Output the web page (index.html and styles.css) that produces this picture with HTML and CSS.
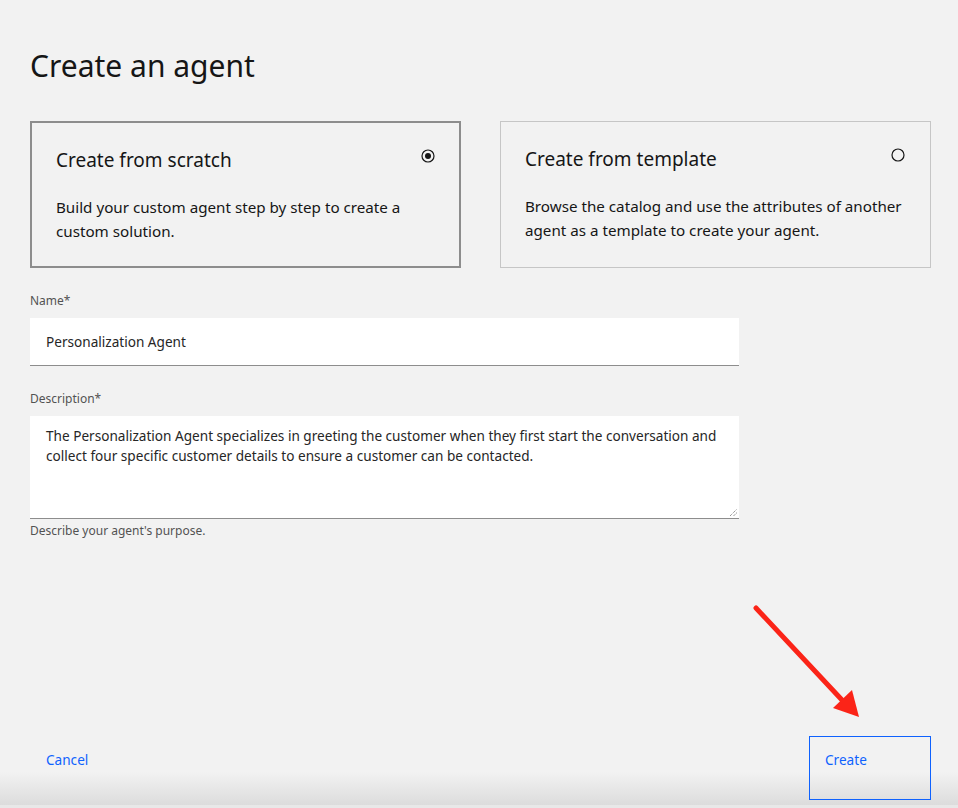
FILE: index.html
```html
<!DOCTYPE html>
<html lang="en">
<head>
<meta charset="utf-8">
<title>Create an agent</title>
<link rel="stylesheet" href="styles.css">
</head>
<body>
<div class="page">
  <h1 class="title">Create an agent</h1>
  <div class="tiles">
    <div class="tile tile--selected">
      <div class="tile-head">
        <span class="tile-title">Create from scratch</span>
        <svg class="radio" width="14" height="14" viewBox="0 0 14 14"><circle cx="7" cy="7" r="6" fill="none" stroke="#161616" stroke-width="1.2"/><circle cx="7" cy="7" r="3" fill="#161616"/></svg>
      </div>
      <p class="tile-desc">Build your custom agent step by step to create a custom solution.</p>
    </div>
    <div class="tile">
      <div class="tile-head">
        <span class="tile-title">Create from template</span>
        <svg class="radio" width="14" height="14" viewBox="0 0 14 14"><circle cx="7" cy="7" r="6" fill="none" stroke="#161616" stroke-width="1.2"/></svg>
      </div>
      <p class="tile-desc">Browse the catalog and use the attributes of another agent as a template to create your agent.</p>
    </div>
  </div>
  <div class="form">
    <div class="field">
      <label class="label">Name*</label>
      <div class="input">Personalization Agent</div>
    </div>
    <div class="field">
      <label class="label">Description*</label>
      <div class="textarea">The Personalization Agent specializes in greeting the customer when they first start the conversation and collect four specific customer details to ensure a customer can be contacted.
        <svg class="grip" width="9" height="9" viewBox="0 0 9 9"><path d="M1 8 L8 1 M4.5 8 L8 4.5" stroke="#6f6f6f" stroke-width="1" stroke-dasharray="1 1"/></svg>
      </div>
      <div class="helper">Describe your agent's purpose.</div>
    </div>
  </div>
  <div class="footer">
    <button class="btn btn--ghost">Cancel</button>
    <button class="btn btn--primary">Create</button>
  </div>
  <svg class="arrow" width="958" height="808" viewBox="0 0 958 808">
    <line x1="756" y1="608" x2="842" y2="700" stroke="#fb2418" stroke-width="5" stroke-linecap="round"/>
    <polygon points="859,717 833,708 852,690" fill="#fb2418"/>
  </svg>
</div>
</body>
</html>
```

FILE: styles.css
```css
* { box-sizing: border-box; }
html, body { margin: 0; padding: 0; }
body {
  width: 958px;
  height: 808px;
  overflow: hidden;
  font-family: "Noto Sans", "Open Sans", sans-serif;
  color: #161616;
  background: linear-gradient(to bottom, #f2f2f2 0, #f2f2f2 772px, #dcdcdc 805px, #e8e8e8 805px, #e8e8e8 808px);
}
.page {
  position: relative;
  height: 808px;
  padding: 46px 27px 0 30px;
  display: flex;
  flex-direction: column;
}
.title {
  margin: 0;
  font-size: 30px;
  line-height: 40px;
  font-weight: 400;
  letter-spacing: 0;
}
.tiles {
  margin-top: 35px;
  display: grid;
  grid-template-columns: 431px 431px;
  column-gap: 39px;
}
.tile {
  height: 147px;
  border: 1px solid #c6c6c6;
  padding: 23px 25px 0 24px;
}
.tile--selected {
  border: 2px solid #8d8d8d;
  padding: 23px 24px 0 24px;
}
.tile-head {
  display: flex;
  justify-content: space-between;
  align-items: flex-start;
}
.tile-title {
  font-size: 19px;
  line-height: 28px;
}
.radio { margin-top: 3px; }
.tile-desc {
  margin: 21px 0 0;
  font-size: 15.2px;
  line-height: 24px;
}
.form {
  margin-top: 25px;
  width: 709px;
  display: flex;
  flex-direction: column;
  gap: 25px;
}
.field { display: flex; flex-direction: column; }
.label {
  font-size: 12px;
  line-height: 16px;
  color: #525252;
  margin-bottom: 9px;
}
.input {
  height: 48px;
  background: #fff;
  border-bottom: 1px solid #8d8d8d;
  padding: 0 16px;
  font-size: 13.6px;
  line-height: 47px;
  color: #262626;
}
.textarea {
  position: relative;
  height: 103px;
  background: #fff;
  border-bottom: 1px solid #8d8d8d;
  padding: 10px 16px;
  font-size: 13.6px;
  line-height: 20px;
  color: #262626;
}
.grip {
  position: absolute;
  right: 1px;
  bottom: 1px;
}
.helper {
  margin-top: 4px;
  font-size: 12px;
  line-height: 16px;
  color: #525252;
}
.footer {
  margin-top: auto;
  margin-bottom: 8px;
  display: flex;
  justify-content: space-between;
  align-items: stretch;
  height: 64px;
}
.btn {
  font-family: inherit;
  font-size: 13.6px;
  background: transparent;
  color: #0f62fe;
  display: flex;
  align-items: flex-start;
  padding: 14px 16px 0;
  line-height: 20px;
  cursor: pointer;
}
.btn--ghost {
  border: none;
  width: 120px;
}
.btn--primary {
  width: 122px;
  border: 1px solid #0f62fe;
  padding-left: 15px;
  padding-top: 13px;
}
.arrow {
  position: absolute;
  left: 0;
  top: 0;
  pointer-events: none;
}
```
